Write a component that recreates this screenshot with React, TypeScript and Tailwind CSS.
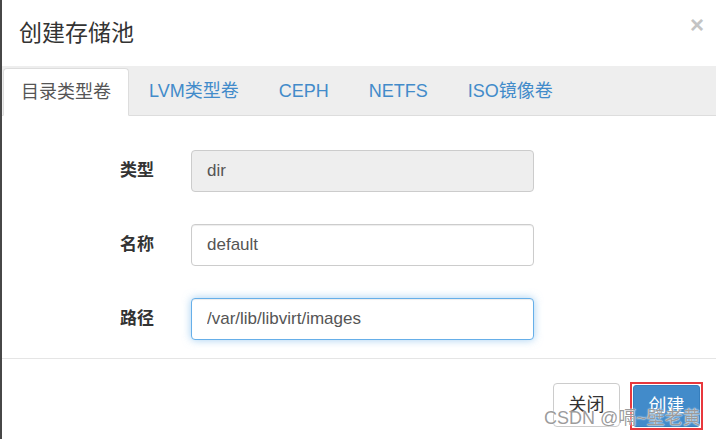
import { useState } from 'react';

const tabs = ['目录类型卷', 'LVM类型卷', 'CEPH', 'NETFS', 'ISO镜像卷'];

const font = { fontFamily: '"Liberation Sans", "Noto Sans CJK SC", sans-serif' };

export default function App() {
    const [active, setActive] = useState(0);

    return (
        <div
            style={font}
            className="relative w-[716px] h-[439px] overflow-hidden bg-white border-l-2 border-[#474747] flex flex-col"
        >
            {/* header */}
            <div className="h-[66px] flex items-center justify-between pl-[17px] pr-[12px] shrink-0">
                <h4 className="text-[23px] text-[#333] leading-none">创建存储池</h4>
                <button className="text-[24px] font-bold text-[#c4c4c4] leading-none -mt-[16px]">
                    ×
                </button>
            </div>

            {/* tabs */}
            <div className="h-[50px] bg-[#eee] border-b border-[#ddd] flex items-end pl-[1px] shrink-0">
                {tabs.map((t, i) =>
                    i === active ? (
                        <button
                            key={t}
                            onClick={() => setActive(i)}
                            className="h-[48px] -mb-px bg-white border border-[#ddd] border-b-white rounded-t-[4px] px-[17px] text-[18px] text-[#555]"
                        >
                            {t}
                        </button>
                    ) : (
                        <button
                            key={t}
                            onClick={() => setActive(i)}
                            className="h-[48px] px-[20px] first:ml-0 text-[18px] text-[#428bca]"
                        >
                            {t}
                        </button>
                    )
                )}
            </div>

            {/* form */}
            <div className="flex flex-col gap-[32px] pt-[34px] pb-[18px] border-b border-[#e5e5e5] shrink-0">
                <div className="flex items-center">
                    <label className="w-[152px] text-right text-[17px] font-bold text-[#333]">类型</label>
                    <input
                        readOnly
                        value="dir"
                        className="ml-[37px] w-[343px] h-[42px] px-[15px] rounded-[4px] border border-[#ccc] bg-[#eee] text-[17px] text-[#555] outline-none"
                    />
                </div>
                <div className="flex items-center">
                    <label className="w-[152px] text-right text-[17px] font-bold text-[#333]">名称</label>
                    <input
                        defaultValue="default"
                        className="ml-[37px] w-[343px] h-[42px] px-[15px] rounded-[4px] border border-[#ccc] bg-white text-[17px] text-[#555] outline-none shadow-[inset_0_1px_1px_rgba(0,0,0,0.075)]"
                    />
                </div>
                <div className="flex items-center">
                    <label className="w-[152px] text-right text-[17px] font-bold text-[#333]">路径</label>
                    <input
                        defaultValue="/var/lib/libvirt/images"
                        className="ml-[37px] w-[343px] h-[42px] px-[15px] rounded-[4px] border border-[#66afe9] bg-white text-[17px] text-[#555] outline-none shadow-[inset_0_1px_1px_rgba(0,0,0,0.075),0_0_8px_rgba(102,175,233,0.6)]"
                    />
                </div>
            </div>

            {/* footer */}
            <div className="flex justify-end items-start gap-[10px] pt-[23px] pr-[13px]">
                <button className="mt-[1px] w-[67px] h-[44px] rounded-[4px] border border-[#ccc] bg-white text-[18px] text-[#333]">
                    关闭
                </button>
                <div className="border-2 border-[#e8383d] p-[1px]">
                    <button className="block w-[67px] h-[42px] rounded-[3px] border border-[#357ebd] bg-[#428bca] text-[18px] text-white">
                        创建
                    </button>
                </div>
            </div>

            <span className="absolute left-[542px] top-[409px] text-[18px] leading-none text-[#8a8a8a]/85 [text-shadow:0_0_2px_#fff,0_0_1px_#fff] pointer-events-none whitespace-nowrap">
                CSDN @嗝~壁老黄
            </span>
        </div>
    );
}
